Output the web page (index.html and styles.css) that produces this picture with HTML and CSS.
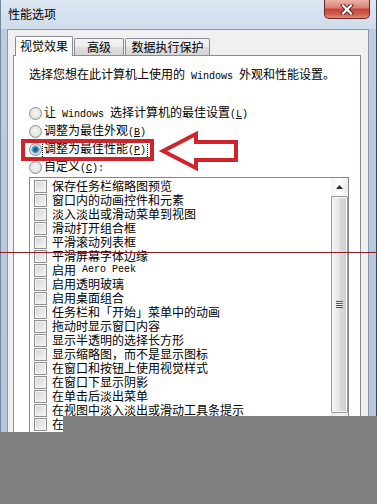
FILE: index.html
```html
<!DOCTYPE html>
<html lang="zh-CN">
<head>
<meta charset="utf-8">
<title>性能选项</title>
<link rel="stylesheet" href="styles.css">
</head>
<body>
<div class="win">
  <div class="titlebar">
    <span class="title">性能选项</span>
    <div class="close">
      <svg width="14" height="11" viewBox="0 0 14 11">
        <path d="M3 1.5 L11 9.5 M11 1.5 L3 9.5" stroke="#5a2420" stroke-width="4" stroke-linecap="square"/>
        <path d="M3 1.5 L11 9.5 M11 1.5 L3 9.5" stroke="#ffffff" stroke-width="2.2" stroke-linecap="square"/>
      </svg>
    </div>
  </div>
  <div class="client">
    <div class="tabs">
      <div class="tab tab-sel">视觉效果</div>
      <div class="tab tab-adv">高级</div>
      <div class="tab tab-dep">数据执行保护</div>
    </div>
    <div class="panel">
      <p class="intro">选择您想在此计算机上使用的<span class="lat"> Windows </span>外观和性能设置。</p>
      <div class="radios">
        <div class="radio"><span class="rb"></span><span>让<span class="lat"> Windows </span>选择计算机的最佳设置<span class="lat">(<u>L</u>)</span></span></div>
        <div class="radio"><span class="rb"></span><span>调整为最佳外观<span class="lat">(<u>B</u>)</span></span></div>
        <div class="radio"><span class="rb rb-on"></span><span class="focus">调整为最佳性能<span class="lat">(<u>P</u>)</span></span></div>
        <div class="radio"><span class="rb"></span><span>自定义<span class="lat">(<u>C</u>):</span></span></div>
      </div>
      <div class="listbox">
        <div class="items">
          <div class="item"><span class="cb"></span>保存任务栏缩略图预览</div>
          <div class="item"><span class="cb"></span>窗口内的动画控件和元素</div>
          <div class="item"><span class="cb"></span>淡入淡出或滑动菜单到视图</div>
          <div class="item"><span class="cb"></span>滑动打开组合框</div>
          <div class="item"><span class="cb"></span>平滑滚动列表框</div>
          <div class="item"><span class="cb"></span>平滑屏幕字体边缘</div>
          <div class="item"><span class="cb"></span>启用<span class="lat"> Aero Peek</span></div>
          <div class="item"><span class="cb"></span>启用透明玻璃</div>
          <div class="item"><span class="cb"></span>启用桌面组合</div>
          <div class="item"><span class="cb"></span>任务栏和「开始」菜单中的动画</div>
          <div class="item"><span class="cb"></span>拖动时显示窗口内容</div>
          <div class="item"><span class="cb"></span>显示半透明的选择长方形</div>
          <div class="item"><span class="cb"></span>显示缩略图，而不是显示图标</div>
          <div class="item"><span class="cb"></span>在窗口和按钮上使用视觉样式</div>
          <div class="item"><span class="cb"></span>在窗口下显示阴影</div>
          <div class="item"><span class="cb"></span>在单击后淡出菜单</div>
          <div class="item"><span class="cb"></span>在视图中淡入淡出或滑动工具条提示</div>
          <div class="item"><span class="cb"></span>在桌面上为图标标签使用阴影</div>
          <div class="item"><span class="cb"></span>在最大化和最小化时动态显示窗口</div>
        </div>
        <div class="scroll">
          <div class="sb-up">
            <svg width="7" height="4" viewBox="0 0 7 4"><path d="M0 4 L3.5 0 L7 4 Z" fill="#2b2b2b"/></svg>
          </div>
          <div class="sb-thumb"><span class="grip"></span></div>
        </div>
      </div>
    </div>
  </div>
</div>
<div class="redline"></div>
<div class="mark-box"></div>
<svg class="mark-arrow" width="84" height="42" viewBox="0 0 84 42">
  <polygon points="5,21 38,4 38,12 78,12 78,30 38,30 38,38" fill="#ffffff" stroke="#d0232b" stroke-width="4" stroke-linejoin="miter"/>
</svg>
<div class="shade shade-a"></div>
<div class="shade shade-b"></div>
</body>
</html>
```

FILE: styles.css
```css
* { box-sizing: border-box; margin: 0; padding: 0; }

html, body {
  width: 377px;
  height: 504px;
  overflow: hidden;
  background: #f0f0f0;
}

body {
  position: relative;
  font-family: "Noto Sans CJK SC", "Noto Sans", sans-serif;
  font-size: 12px;
  line-height: 14px;
  color: #000;
}

.lat {
  font-family: "Liberation Mono", monospace;
  font-size: 10px;
  white-space: pre;
}

u { text-decoration: underline; }

.win {
  height: 504px;
  display: flex;
  flex-direction: column;
  background: linear-gradient(180deg, #dbe6f1 0, #cfdcea 29px, #bccde1 29px, #b2c5dc 100%);
  border-left: 1px solid #75879d;
  border-right: 1px solid #33475e;
}

.titlebar {
  height: 29px;
  display: flex;
  align-items: flex-start;
  flex: none;
}

.title {
  margin: 7px 0 0 7px;
  font-size: 12px;
  line-height: 14px;
}

.close {
  margin-left: auto;
  margin-right: 6px;
  width: 46px;
  height: 19px;
  border: 1px solid #6b2822;
  border-top: none;
  border-radius: 0 0 5px 5px;
  background: linear-gradient(180deg, #eab2a6 0%, #dc8276 42%, #c5463c 52%, #cf5d50 78%, #de8b75 100%);
  display: flex;
  align-items: center;
  justify-content: center;
}

.client {
  flex: 1;
  margin: 0 7px 0 6px;
  background: #f0f0f0;
  border: 1px solid #8597ad;
  border-bottom: none;
  padding: 6px 7px 0 5px;
  display: flex;
  flex-direction: column;
  min-height: 0;
}

.tabs {
  display: flex;
  align-items: flex-end;
  height: 19px;
  padding-left: 2px;
  flex: none;
  position: relative;
  z-index: 2;
}

.tab {
  border: 1px solid #898c95;
  border-bottom: none;
  text-align: center;
  height: 17px;
  padding-top: 1px;
  background: linear-gradient(180deg, #f4f4f4 0%, #ececec 50%, #dedede 51%, #d6d6d6 100%);
  border-radius: 2px 2px 0 0;
}

.tab-sel {
  height: 20px;
  margin-bottom: -1px;
  padding-top: 2px;
  background: #ffffff;
  width: 58px;
}

.tab-adv { width: 50px; margin-left: 1px; }
.tab-dep { width: 85px; margin-left: 1px; }

.panel {
  flex: 1;
  background: #ffffff;
  border: 1px solid #898c95;
  padding: 0 11px 0 15px;
  display: flex;
  flex-direction: column;
  min-height: 0;
}

.intro {
  margin-top: 11px;
  height: 14px;
  white-space: nowrap;
}

.radios {
  margin-top: 23px;
  display: flex;
  flex-direction: column;
}

.radio {
  height: 18px;
  display: flex;
  align-items: center;
  white-space: nowrap;
}

.rb {
  width: 13px;
  height: 13px;
  border-radius: 50%;
  border: 1px solid #8d8e8f;
  background: radial-gradient(circle at 50% 45%, #f6f6f6 0, #e6e6e6 55%, #cfcfcf 100%);
  margin-right: 2px;
  flex: none;
}

.rb-on {
  background:
    radial-gradient(circle at 50% 50%, #1b4f7c 0, #1f5e94 1.5px, #4b9ad2 3px, #86c0e8 4px, transparent 4.4px),
    radial-gradient(circle at 50% 45%, #f6f6f6 0, #e6e6e6 55%, #cfcfcf 100%);
}

.focus {
  outline: 1px dotted #000;
  outline-offset: 0;
  padding: 0 1px;
  margin-left: -1px;
}

.listbox {
  margin-top: 1px;
  height: 272px;
  border: 1px solid #828790;
  display: flex;
  flex: none;
}

.items {
  flex: 1;
  padding: 1px 0 0 4px;
  overflow: hidden;
}

.item {
  height: 14px;
  display: flex;
  align-items: center;
  white-space: nowrap;
}

.cb {
  width: 13px;
  height: 13px;
  border: 1px solid #8f8f8f;
  background: linear-gradient(135deg, #d7d7d7 0%, #e6e6e6 50%, #f6f6f6 100%);
  box-shadow: inset 0 0 0 1px #f4f4f4;
  margin-right: 5px;
  flex: none;
}

.scroll {
  width: 17px;
  flex: none;
  background: linear-gradient(90deg, #e3e3e3 0%, #f2f2f2 30%, #f6f6f6 70%, #e9e9e9 100%);
  display: flex;
  flex-direction: column;
}

.sb-up {
  height: 17px;
  margin: 0 0 0 0;
  display: flex;
  align-items: center;
  justify-content: center;
  background: linear-gradient(90deg, #f2f2f2, #ffffff 50%, #ebebeb);
}

.sb-thumb {
  margin-top: 1px;
  height: 217px;
  border: 1px solid #979797;
  border-radius: 2px;
  background: linear-gradient(90deg, #f3f3f3 0%, #e8e8e8 45%, #d9d9d9 55%, #cfcfcf 100%);
  box-shadow: inset 0 0 0 1px #f8f8f8;
  display: flex;
  align-items: center;
  justify-content: center;
}

.grip {
  width: 7px;
  height: 7px;
  background: repeating-linear-gradient(180deg, #555 0, #555 1px, #eee 1px, #eee 2px);
}

.redline {
  position: absolute;
  left: 0;
  top: 252px;
  width: 377px;
  height: 1px;
  background: #8e1a28;
}

.mark-box {
  position: absolute;
  left: 21px;
  top: 139px;
  width: 133px;
  height: 22px;
  border: 4px solid #d0232b;
}

.mark-arrow {
  position: absolute;
  left: 158px;
  top: 130px;
}

.shade {
  position: absolute;
  background: #808080;
}

.shade-a {
  left: 63px;
  top: 416px;
  width: 314px;
  height: 88px;
}

.shade-b {
  left: 0;
  top: 432px;
  width: 377px;
  height: 72px;
}
```
